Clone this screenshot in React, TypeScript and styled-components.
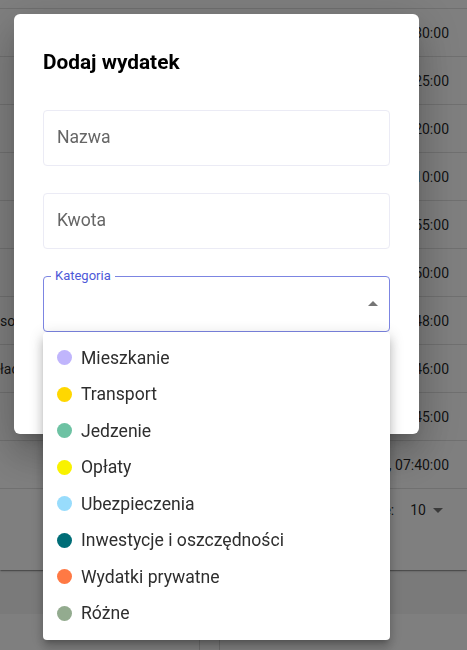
import styled, { createGlobalStyle } from 'styled-components';

const GlobalStyle = createGlobalStyle`
  html, body {
    margin: 0;
    padding: 0;
  }
  body {
    font-family: Roboto, "Noto Sans", "Liberation Sans", sans-serif;
    background: #f4f4f4;
  }
  * {
    box-sizing: border-box;
  }
`;

type Category = { name: string; color: string };

const categories: Category[] = [
  { name: 'Mieszkanie', color: '#c0b5fc' },
  { name: 'Transport', color: '#ffd700' },
  { name: 'Jedzenie', color: '#6dc2a3' },
  { name: 'Opłaty', color: '#f9f200' },
  { name: 'Ubezpieczenia', color: '#98dcfc' },
  { name: 'Inwestycje i oszczędności', color: '#006d77' },
  { name: 'Wydatki prywatne', color: '#ff7944' },
  { name: 'Różne', color: '#93ab8f' },
];

// wiersze tabeli w tle
const rows = [
  { desc: '', date: '14.03.2022, 08:30:00' },
  { desc: '', date: '14.03.2022, 08:25:00' },
  { desc: '', date: '14.03.2022, 08:20:00' },
  { desc: '', date: '14.03.2022, 08:10:00' },
  { desc: '', date: '13.03.2022, 07:55:00' },
  { desc: '', date: '13.03.2022, 07:50:00' },
  { desc: 'sowa kawiarnia', date: '13.03.2022, 07:48:00' },
  { desc: 'łaciński kurs', date: '13.03.2022, 07:46:00' },
  { desc: '', date: '12.03.2022, 07:45:00' },
  { desc: '', date: '12.03.2022, 07:40:00' },
];

const App = () => {
  return (
    <>
      <GlobalStyle />
      <Page>
        <TablePaper>
          <HeaderTail />
          {rows.map((row) => (
            <Row key={row.date}>
              <DescCell>{row.desc}</DescCell>
              <DateCell>{row.date}</DateCell>
            </Row>
          ))}
          <Pagination>
            <PaginationBar>
              <span>Wierszy na stronie:</span>
              <PageSize>
                10
                <svg width="10" height="5" viewBox="0 0 10 5">
                  <polygon points="0,0 10,0 5,5" fill="#757575" />
                </svg>
              </PageSize>
            </PaginationBar>
          </Pagination>
        </TablePaper>
        <BottomPaper>
          <BottomCell />
          <BottomCell />
          <BottomCell $last />
        </BottomPaper>
      </Page>

      <Overlay>
        <Dialog>
          <Title>Dodaj wydatek</Title>
          <Form>
            <Field>Nazwa</Field>
            <Field>Kwota</Field>
            <SelectField>
              <SelectLabel>Kategoria</SelectLabel>
              <SelectArrow width="10" height="5" viewBox="0 0 10 5">
                <polygon points="0,5 5,0 10,5" fill="#757575" />
              </SelectArrow>
              <Menu>
                {categories.map((c) => (
                  <MenuItem key={c.name}>
                    <Dot $color={c.color} />
                    {c.name}
                  </MenuItem>
                ))}
              </Menu>
            </SelectField>
          </Form>
        </Dialog>
      </Overlay>
    </>
  );
};

export default App;

const Page = styled.div`
  height: 650px;
  overflow: hidden;
  display: flex;
  flex-direction: column;
  gap: 44px;
  background: #f4f4f4;
`;

const TablePaper = styled.div`
  background: #fff;
  box-shadow: 0 2px 1px -1px rgba(0, 0, 0, 0.2), 0 1px 1px 0 rgba(0, 0, 0, 0.14),
    0 1px 3px 0 rgba(0, 0, 0, 0.12);
`;

const HeaderTail = styled.div`
  height: 9px;
  border-bottom: 1px solid #e0e0e0;
`;

const Row = styled.div`
  display: grid;
  grid-template-columns: 1fr auto;
  align-items: center;
  height: 48px;
  border-bottom: 1px solid #e0e0e0;
  font-size: 14px;
  color: rgba(0, 0, 0, 0.87);
`;

const DescCell = styled.div`
  white-space: nowrap;
  overflow: hidden;
  padding-left: 0;
`;

const DateCell = styled.div`
  white-space: nowrap;
  padding-right: 18px;
`;

const Pagination = styled.div`
  height: 81px;
`;

const PaginationBar = styled.div`
  height: 42px;
  display: flex;
  align-items: center;
  justify-content: flex-end;
  gap: 16px;
  padding-right: 24px;
  font-size: 14px;
  color: rgba(0, 0, 0, 0.87);
`;

const PageSize = styled.span`
  display: flex;
  align-items: center;
  gap: 7px;
`;

const BottomPaper = styled.div`
  flex: 1;
  display: grid;
  grid-template-columns: 200px 20px 1fr;
  background: #fff;
`;

const BottomCell = styled.div<{ $last?: boolean }>`
  border-right: ${(p) => (p.$last ? 'none' : '1px solid #dcdcdc')};
`;

const Overlay = styled.div`
  position: fixed;
  inset: 0;
  background: rgba(0, 0, 0, 0.5);
  padding: 14px;
  display: flex;
  align-items: flex-start;
`;

const Dialog = styled.div`
  width: 405px;
  background: #fff;
  border-radius: 6px;
  padding: 32px 29px 102px;
  box-shadow: 0 11px 15px -7px rgba(0, 0, 0, 0.2),
    0 24px 38px 3px rgba(0, 0, 0, 0.14), 0 9px 46px 8px rgba(0, 0, 0, 0.12);
`;

const Title = styled.h2`
  margin: 0;
  font-size: 20.8px;
  font-weight: 700;
  line-height: 32px;
  color: #000;
`;

const Form = styled.div`
  display: flex;
  flex-direction: column;
  gap: 27px;
  margin-top: 32px;
`;

const Field = styled.div`
  height: 56px;
  border: 1px solid #ebebf5;
  border-radius: 4px;
  padding: 0 13px 2px;
  display: flex;
  align-items: center;
  font-size: 17.6px;
  color: #666;
`;

const SelectField = styled.div`
  position: relative;
  height: 56px;
  border: 1px solid #7c85e2;
  border-radius: 4px;
`;

const SelectLabel = styled.span`
  position: absolute;
  top: -10px;
  left: 7px;
  padding: 0 4px;
  background: #fff;
  font-size: 13px;
  line-height: 17px;
  color: #4d59d8;
`;

const SelectArrow = styled.svg`
  position: absolute;
  right: 11px;
  top: 24px;
`;

const Menu = styled.div`
  position: absolute;
  top: calc(100% + 1px);
  left: -1px;
  right: -1px;
  z-index: 2;
  padding: 8px 0;
  background: #fff;
  border-radius: 4px;
  box-shadow: 0 5px 5px -3px rgba(0, 0, 0, 0.2), 0 8px 10px 1px rgba(0, 0, 0, 0.14),
    0 3px 14px 2px rgba(0, 0, 0, 0.12);
`;

const MenuItem = styled.div`
  height: 36.5px;
  display: flex;
  align-items: center;
  gap: 9px;
  padding: 0 14px 1px;
  font-size: 17.6px;
  color: #2e2e2e;
`;

const Dot = styled.span<{ $color: string }>`
  width: 15px;
  height: 15px;
  border-radius: 50%;
  flex-shrink: 0;
  background: ${(p) => p.$color};
`;
